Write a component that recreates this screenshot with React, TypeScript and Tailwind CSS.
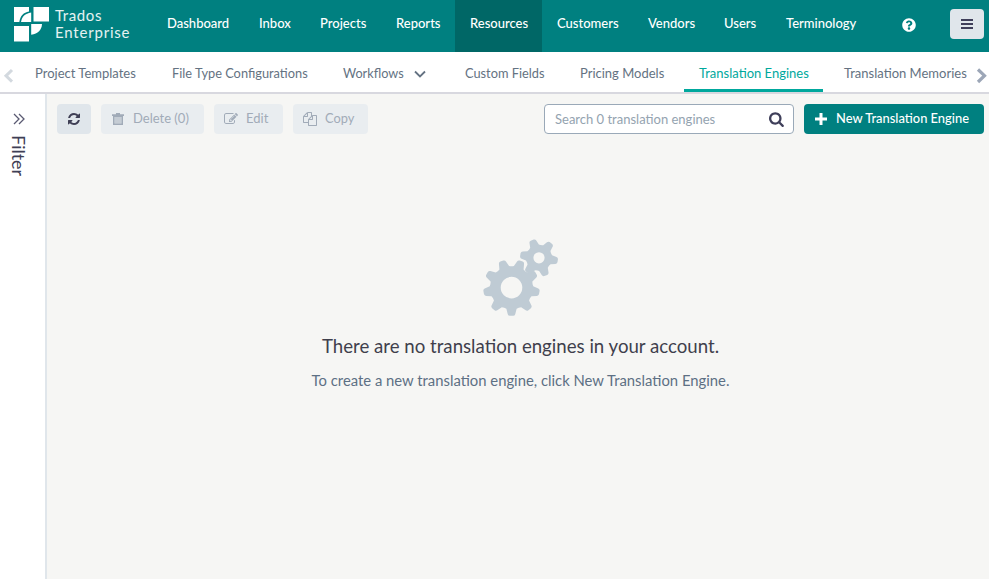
import React from "react";
import { FaQuestionCircle } from "react-icons/fa";

const nav = [
  { label: "Dashboard", box: "w-[92px]" },
  { label: "Inbox", box: "w-[61px]" },
  { label: "Projects", box: "w-[76px]" },
  { label: "Reports", box: "w-[74px]" },
  { label: "Resources", box: "w-[87px] bg-[#006766]", active: true },
  { label: "Customers", box: "w-[91px]" },
  { label: "Vendors", box: "w-[76px]" },
  { label: "Users", box: "w-[62px]" },
  { label: "Terminology", box: "w-[100px]" },
];

const tabs = [
  { label: "Project Templates", box: "w-[137px] pl-[15px]" },
  { label: "File Type Configurations", box: "w-[171px] pl-[15px] text-[12.8px]" },
  { label: "Workflows", box: "w-[122px] pl-[15px] text-[12.7px]", menu: true },
  { label: "Custom Fields", box: "w-[115px] pl-[15px] text-[12.8px]" },
  { label: "Pricing Models", box: "w-[119px] pl-[15px]" },
  { label: "Translation Engines", box: "w-[139px] pl-[15px]", active: true },
  { label: "Translation Memories", box: "w-[147px] pl-[21px]" },
];

const REFRESH =
  "M1639 1056q0 5-1 7-64 268-268 434.5t-478 166.5q-146 0-282.5-55t-243.5-157l-129 129q-19 19-45 19t-45-19-19-45v-448q0-26 19-45t45-19h448q26 0 45 19t19 45-19 45l-137 137q71 66 161 102t187 36q134 0 250-65t186-179q11-17 53-117 8-23 30-23h192q13 0 22.5 9.5t9.5 22.5zm25-800v448q0 26-19 45t-45 19h-448q-26 0-45-19t-19-45 19-45l138-138q-148-137-349-137-134 0-250 65t-186 179q-11 17-53 117-8 23-30 23h-199q-13 0-22.5-9.5t-9.5-22.5v-7q65-268 270-434.5t480-166.5q146 0 284 55.5t245 156.5l130-129q19-19 45-19t45 19 19 45z";
const EDIT =
  "M888 1184l116-116-152-152-116 116v56h96v96h56zm440-720q-16-16-33 1l-350 350q-17 17-1 33t33-1l350-350q17-17 1-33zm80 594v190q0 119-84.5 203.5t-203.5 84.5h-832q-119 0-203.5-84.5t-84.5-203.5v-832q0-119 84.5-203.5t203.5-84.5h832q63 0 117 25 15 7 18 23 3 17-9 29l-49 49q-14 14-32 8-23-6-45-6h-832q-66 0-113 47t-47 113v832q0 66 47 113t113 47h832q66 0 113-47t47-113v-126q0-13 9-22l64-64q15-15 35-7t20 29zm-96-738l288 288-672 672h-288v-288zm444 132l-92 92-288-288 92-92q28-28 68-28t68 28l152 152q28 28 28 68t-28 68z";
const COPY =
  "M1696 384q40 0 68 28t28 68v1216q0 40-28 68t-68 28h-960q-40 0-68-28t-28-68v-288h-544q-40 0-68-28t-28-68v-672q0-40 20-88t48-76l408-408q28-28 76-48t88-20h416q40 0 68 28t28 68v328q68-40 128-40h416zm-544 213l-299 299h299v-299zm-640-384l-299 299h299v-299zm196 647l316-316v-416h-384v416q0 40-28 68t-68 28h-416v640h512v-256q0-40 20-88t48-76zm956 804v-1152h-384v416q0 40-28 68t-68 28h-416v640h896z";
const SEARCH =
  "M1152 832q0-185-131.5-316.5t-316.5-131.5-316.5 131.5-131.5 316.5 131.5 316.5 316.5 131.5 316.5-131.5 131.5-316.5zm512 832q0 52-38 90t-90 38q-54 0-90-38l-343-342q-179 124-399 124-143 0-273.5-55.5t-225-150-150-225-55.5-273.5 55.5-273.5 150-225 225-150 273.5-55.5 273.5 55.5 225 150 150 225 55.5 273.5q0 220-124 399l343 343q37 37 37 90z";

function Glyph({ d, className }: { d: string; className: string }) {
  return (
    <svg viewBox="0 0 1792 1792" fill="currentColor" className={className}>
      <path d={d} />
    </svg>
  );
}

// Gear outline with evenly spaced teeth; angles are in degrees.
function gear(cx: number, cy: number, root: number, tip: number, hole: number, teeth: number, start: number) {
  const step = 360 / teeth;
  const at = (r: number, a: number) => {
    const t = (a * Math.PI) / 180;
    return `${(cx + r * Math.cos(t)).toFixed(2)} ${(cy + r * Math.sin(t)).toFixed(2)}`;
  };
  let d = "";
  for (let i = 0; i < teeth; i++) {
    const a = start + i * step;
    d += `${i ? "L" : "M"}${at(root, a - step * 0.34)}L${at(tip - 1.5, a - step * 0.2)}Q${at(tip, a - step * 0.17)} ${at(tip, a - step * 0.08)}L${at(tip, a + step * 0.08)}Q${at(tip, a + step * 0.17)} ${at(tip - 1.5, a + step * 0.2)}L${at(root, a + step * 0.34)}Q${at(root - 0.8, a + step * 0.5)} ${at(root, a + step * 0.66)}`;
  }
  return `${d}ZM${cx + hole} ${cy}A${hole} ${hole} 0 1 0 ${cx - hole} ${cy}A${hole} ${hole} 0 1 0 ${cx + hole} ${cy}Z`;
}

function Logo() {
  return (
    <svg width="36" height="36" viewBox="0 0 36 36" fill="#fff">
      <path d="M1 1h15v4.500C10.500 6.500 7.500 9.500 6.300 16H1z" />
      <path d="M20.500 1H36v14.500H20.500z" />
      <path d="M8 16C9 10.500 12 7.500 18.200 6.500V16z" />
      <path d="M1 20h15v15.500H1z" />
      <path d="M18.200 18H29C28.700 24 25 28 18.200 28.700z" />
    </svg>
  );
}

function Header() {
  return (
    <header className="flex h-[52px] bg-[#008080] text-white">
      <div className="flex w-[152px] shrink-0 pl-[13px] pt-[6px]">
        <Logo />
        <div className="ml-[6px] text-[15px] leading-[18px] font-normal text-white/90">
          <div className="tracking-[0.6px]">Trados</div>
          <div className="-mt-px tracking-[0.8px]">Enterprise</div>
        </div>
      </div>
      <nav className="flex">
        {nav.map((n) => (
          <a key={n.label} className={`${n.box} shrink-0 whitespace-nowrap pl-[15px] pt-[13px] text-[13px] leading-[20px] font-medium`}>
            {n.label}
          </a>
        ))}
      </nav>
      <FaQuestionCircle className="mt-[18px] ml-[31px] size-[14px]" />
      <button className="mt-[9px] ml-[34px] flex h-[30px] w-[34px] flex-col items-center justify-center gap-[2px] rounded bg-[#e0e6eb]">
        <span className="h-[2px] w-[12px] bg-[#3f3f5a]" />
        <span className="h-[2px] w-[12px] bg-[#3f3f5a]" />
        <span className="h-[2px] w-[12px] bg-[#3f3f5a]" />
      </button>
    </header>
  );
}

function Tabs() {
  return (
    <div className="flex h-[42px] border-b-2 border-[#d8d8df] bg-white text-[13px] text-[#647282]">
      <svg width="20" height="40" viewBox="0 0 20 40" className="shrink-0" fill="none" stroke="#d3d9df" strokeWidth="3">
        <path d="M12 18l-6 5.800 6 5.800" />
      </svg>
      {tabs.map((t) => (
        <a
          key={t.label}
          className={`${t.box} flex shrink-0 whitespace-nowrap pt-[11px] leading-[20px] ${t.active ? "border-b-[3px] border-[#00a89d] text-[#00a89d]" : ""}`}
        >
          {t.label}
          {t.menu && (
            <svg width="14" height="20" viewBox="0 0 14 20" className="ml-[9px]" fill="none" stroke="#647282" strokeWidth="1.800">
              <path d="M2 8.500l5 5 5-5" />
            </svg>
          )}
        </a>
      ))}
      <svg width="18" height="40" viewBox="0 0 18 40" className="shrink-0" fill="none" stroke="#9ca6b7" strokeWidth="3.200">
        <path d="M8 17.500l6.500 6.200L8 30" />
      </svg>
    </div>
  );
}

export default function App() {
  return (
    <div className="flex h-[579px] w-[989px] flex-col overflow-hidden bg-[#f6f6f4] font-[Lato,sans-serif]">
      <Header />
      <Tabs />
      <div className="flex flex-1">
        <aside className="flex w-[47px] shrink-0 flex-col items-start border-r-2 border-[#e0e6eb] bg-white pt-[19px]">
          <svg width="12" height="12" viewBox="0 0 12 12" className="ml-[13px]" fill="none" stroke="#5a5a72" strokeWidth="1.300">
            <path d="M1 1l5 5-5 5M6 1l5 5-5 5" />
          </svg>
          <div className="mt-[10px] ml-[9px] text-[18px] leading-[20px] text-[#3f3f55] [writing-mode:vertical-rl]">Filter</div>
        </aside>
        <main className="flex flex-1 flex-col pt-[10px] pr-[5px] pl-[10px]">
          <div className="flex h-[30px] text-[13px] text-[#a1abb8]">
            <button className="flex w-[34px] items-center justify-center rounded bg-[#e0e6eb] text-[#3f3f55]">
              <Glyph d={REFRESH} className="size-[14px]" />
            </button>
            <button className="ml-[10px] flex w-[103px] items-center rounded bg-[#e9edf0] pl-[11px]">
              <svg width="12" height="14" viewBox="0 0 12 14" fill="currentColor">
                <path d="M4 1h4v1.300h4V4H0V2.300h4z" />
                <path fillRule="evenodd" d="M1 4h10v9H1zM2.500 5h7v6.600h-7z" />
                <path d="M2.500 5h7v6.600h-7z" opacity=".5" />
              </svg>
              <span className="ml-[9px]">Delete (0)</span>
            </button>
            <button className="ml-[10px] flex w-[69px] items-center rounded bg-[#e9edf0] pl-[10px]">
              <Glyph d={EDIT} className="size-[14px]" />
              <span className="ml-[8px]">Edit</span>
            </button>
            <button className="ml-[10px] flex w-[75px] items-center rounded bg-[#e9edf0] pl-[10px]">
              <Glyph d={COPY} className="size-[14px]" />
              <span className="ml-[8px] text-[12.800px]">Copy</span>
            </button>
            <div className="ml-auto flex w-[250px] items-center justify-between rounded border border-[#9aa9b8] bg-white pr-[9px] pl-[10px]">
              <span className="pt-px text-[#94a3b0]">Search 0 translation engines</span>
              <Glyph d={SEARCH} className="-mr-[1px] size-[16px] text-[#3f3f5a]" />
            </div>
            <button className="ml-[10px] flex w-[180px] items-center rounded bg-[#008080] pl-[11px] text-white">
              <svg width="12" height="12" viewBox="0 0 12 12" fill="none" stroke="currentColor" strokeWidth="3">
                <path d="M6 0v12M0 6h12" />
              </svg>
              <span className="ml-[9px] text-[12.900px] font-medium">New Translation Engine</span>
            </button>
          </div>
          <div className="flex flex-col items-center pt-[105px]">
            <svg width="78" height="78" viewBox="0 0 78 78" fill="#bfcbd4" fillRule="evenodd">
              <path d={gear(29.5, 48.6, 21.8, 28.3, 10.8, 9, 90)} />
              <path d={gear(57, 18.8, 13.3, 19, 5.6, 6, 9)} />
            </svg>
            <h1 className="mt-[17px] text-[18.650px] leading-[24px] text-[#3f3f4c]">There are no translation engines in your account.</h1>
            <p className="mt-[12px] text-[14.830px] leading-[20px] text-[#5d7084]">To create a new translation engine, click New Translation Engine.</p>
          </div>
        </main>
      </div>
    </div>
  );
}
